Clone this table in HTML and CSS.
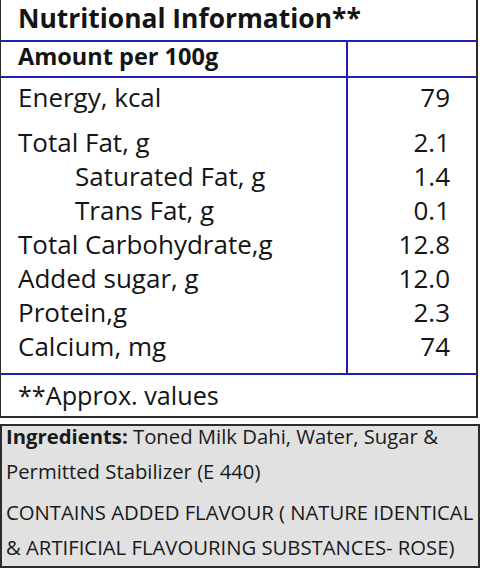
FILE: index.html
```html
<!DOCTYPE html>
<html lang="en">
<head>
    <meta charset="UTF-8">
    <meta name="viewport" content="width=device-width, initial-scale=1.0">
    <title>Nutritional Information</title>
    <link rel="stylesheet" href="styles.css">
</head>
<body>
    <div class="nutrition">
        <div class="nutrition-title">Nutritional Information**</div>
        <div class="row head-row">
            <div class="name">Amount per 100g</div>
            <div class="value"></div>
        </div>
        <div class="nutrients">
            <div class="row energy">
                <div class="name">Energy, kcal</div>
                <div class="value">79</div>
            </div>
            <div class="row">
                <div class="name">Total Fat, g</div>
                <div class="value">2.1</div>
            </div>
            <div class="row">
                <div class="name sub">Saturated Fat, g</div>
                <div class="value">1.4</div>
            </div>
            <div class="row">
                <div class="name sub">Trans Fat, g</div>
                <div class="value">0.1</div>
            </div>
            <div class="row">
                <div class="name">Total Carbohydrate,g</div>
                <div class="value">12.8</div>
            </div>
            <div class="row">
                <div class="name">Added sugar, g</div>
                <div class="value">12.0</div>
            </div>
            <div class="row">
                <div class="name">Protein,g</div>
                <div class="value">2.3</div>
            </div>
            <div class="row last">
                <div class="name">Calcium, mg</div>
                <div class="value">74</div>
            </div>
        </div>
        <div class="footnote">**Approx. values</div>
    </div>

    <div class="ingredients">
        <p><b>Ingredients:</b> Toned Milk Dahi, Water, Sugar &amp;<br>Permitted Stabilizer (E 440)</p>
        <p>CONTAINS ADDED FLAVOUR ( NATURE IDENTICAL<br>&amp; ARTIFICIAL FLAVOURING SUBSTANCES- ROSE)</p>
    </div>
</body>
</html>
```

FILE: styles.css
```css
body {
    margin: 0;
    background: #fff;
    font-family: 'Open Sans', 'Noto Sans', sans-serif;
    color: #141414;
}
.nutrition {
    width: 475px;
    border: 2px solid #2c2c2c;
    border-top: none;
    border-left-width: 1px;
}
.nutrition-title {
    height: 40px;
    padding-left: 17px;
    font-size: 26.4px;
    font-weight: bold;
    line-height: 36px;
    border-bottom: 2px solid #1f1fb0;
}
.row {
    display: grid;
    grid-template-columns: 347px 1fr;
    font-size: 26px;
    line-height: 34px;
}
.row .name {
    padding-left: 17px;
    border-right: 2px solid #1f1fb0;
}
.row .name.sub {
    padding-left: 74px;
}
.row .value {
    text-align: right;
    padding-right: 26px;
}
.head-row {
    font-size: 23.5px;
    font-weight: bold;
    line-height: 28px;
    border-bottom: 2px solid #1f1fb0;
}
.head-row .name,
.head-row .value {
    padding-bottom: 6px;
}
.energy .name,
.energy .value {
    padding-top: 2px;
    padding-bottom: 11px;
}
.last .name,
.last .value {
    padding-bottom: 10px;
}
.nutrients {
    border-bottom: 2px solid #1f1fb0;
}
.footnote {
    height: 41px;
    padding-left: 17px;
    font-size: 25.2px;
    line-height: 41px;
}
.ingredients {
    margin-top: 6px;
    width: 472px;
    height: 140px;
    border: 2px solid #2c2c2c;
    padding-left: 4px;
    background: #e1e1e1;
    color: #1a1a1a;
    font-size: 20.3px;
    line-height: 35px;
}
.ingredients p {
    margin: 0 0 6px;
}
.ingredients p:first-child {
    margin-top: -7px;
}
.ingredients b {
    font-weight: bold;
}
```
